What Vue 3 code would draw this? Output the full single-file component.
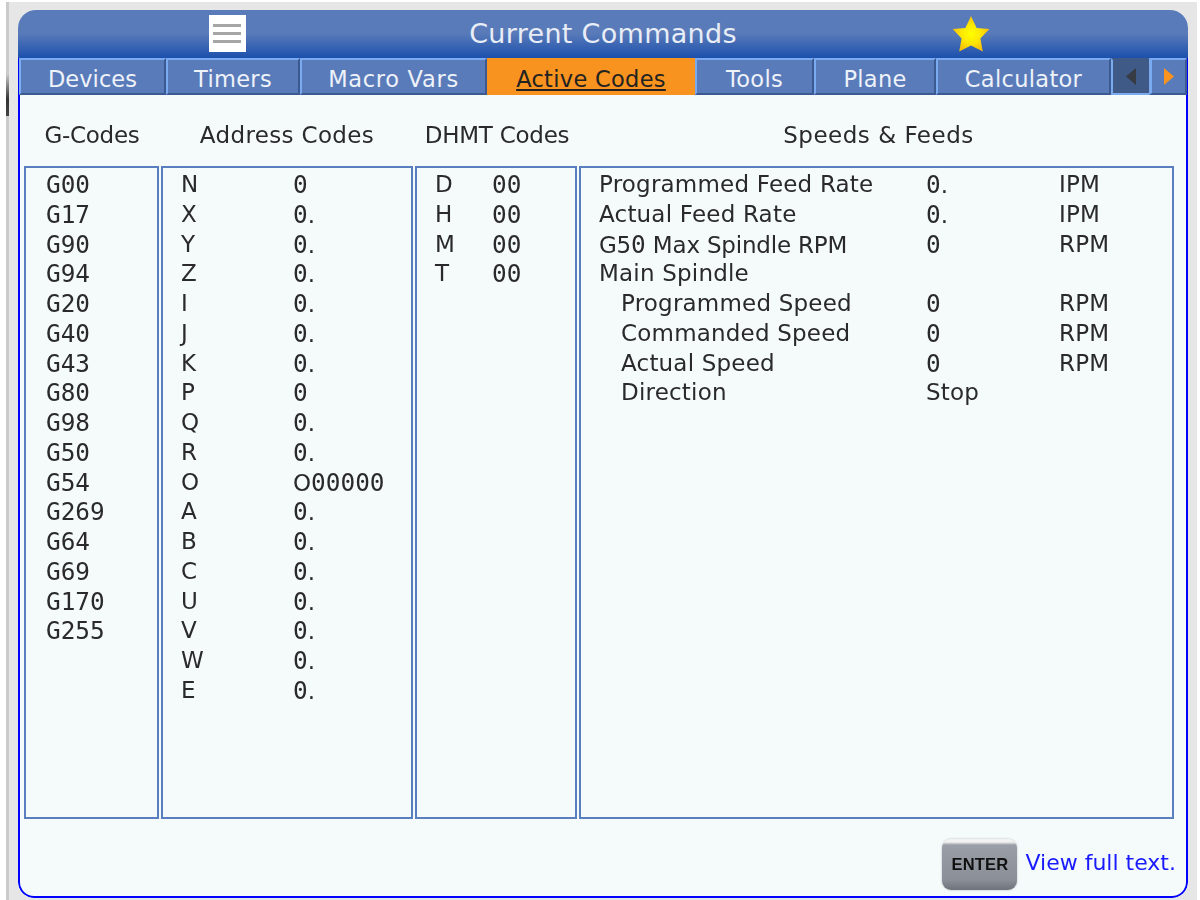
<script setup>
const tabs = [
  { label: 'Devices', cls: 'tab-tight' },
  { label: 'Timers' },
  { label: 'Macro Vars', cls: 'tab-wide' },
  { label: 'Active Codes', cls: 'active' },
  { label: 'Tools' },
  { label: 'Plane' },
  { label: 'Calculator' },
]
const gCodes = ['G00','G17','G90','G94','G20','G40','G43','G80','G98','G50','G54','G269','G64','G69','G170','G255']
const addr = [['N','0'],['X','0.'],['Y','0.'],['Z','0.'],['I','0.'],['J','0.'],['K','0.'],['P','0'],['Q','0.'],['R','0.'],['O','O00000'],['A','0.'],['B','0.'],['C','0.'],['U','0.'],['V','0.'],['W','0.'],['E','0.']]
const dhmt = [['D','00'],['H','00'],['M','00'],['T','00']]
const speeds = [
  { name: 'Programmed Feed Rate', val: '0.', unit: 'IPM' },
  { name: 'Actual Feed Rate', val: '0.', unit: 'IPM' },
  { name: 'G50 Max Spindle RPM', val: '0', unit: 'RPM', tight: true },
  { name: 'Main Spindle', val: '', unit: '' },
  { name: 'Programmed Speed', val: '0', unit: 'RPM', sub: true },
  { name: 'Commanded Speed', val: '0', unit: 'RPM', sub: true },
  { name: 'Actual Speed', val: '0', unit: 'RPM', sub: true },
  { name: 'Direction', val: 'Stop', unit: '', sub: true },
]
// The machine font has a dotted zero: split it out of the proportional text.
const parts = (s) => s.split(/(0+)/).filter(Boolean)
</script>

<template>
  <div class="page">
    <div class="backdrop">
      <div class="edge-mark"></div>
      <div class="window">
        <header class="titlebar">
          <div class="menu-btn">
            <svg width="37" height="37" viewBox="0 0 37 37">
              <rect width="37" height="37" fill="#fff" />
              <rect x="4" y="9" width="28" height="3" fill="#a6a6a6" />
              <rect x="4" y="17" width="28" height="3" fill="#a6a6a6" />
              <rect x="4" y="25" width="28" height="3" fill="#a6a6a6" />
            </svg>
          </div>
          <div class="title">Current Commands</div>
          <svg class="star" width="40" height="40" viewBox="0 0 40 40">
            <defs>
              <radialGradient id="starFill" cx="50%" cy="50%" r="50%">
                <stop offset="0%" stop-color="#ffff00" />
                <stop offset="55%" stop-color="#fde604" />
                <stop offset="100%" stop-color="#f4bd0c" />
              </radialGradient>
            </defs>
            <path d="M20 2 L25.6 14 L38.4 15 L29.4 24.4 L31.8 37.4 L20 31.4 L8.2 37.4 L10.6 24.4 L1.6 15 L14.4 14 Z" fill="url(#starFill)" />
          </svg>
        </header>

        <nav class="tabs">
          <div v-for="t in tabs" :key="t.label" class="tab" :class="t.cls">{{ t.label }}</div>
          <div class="arrow arrow-left">
            <svg width="10" height="17" viewBox="0 0 10 17"><path d="M10 0 V17 L0 8.5 Z" fill="#363b44" /></svg>
          </div>
          <div class="arrow arrow-right">
            <svg width="10" height="17" viewBox="0 0 10 17"><path d="M0 0 V17 L10 8.5 Z" fill="#f7931e" /></svg>
          </div>
        </nav>

        <main class="content">
          <div class="columns heads">
            <div class="head-tight">G-Codes</div>
            <div class="head-addr">Address Codes</div>
            <div class="head-tighter">DHMT Codes</div>
            <div class="head-right">Speeds &amp; Feeds</div>
          </div>

          <div class="columns panels">
            <section class="panel panel-g">
              <div v-for="g in gCodes" :key="g" class="row zero">{{ g }}</div>
            </section>
            <section class="panel panel-a">
              <div v-for="a in addr" :key="a[0]" class="row pair-a">
                <span>{{ a[0] }}</span>
                <span><span v-for="(p, i) in parts(a[1])" :key="i" :class="{ zero: p[0] === '0' }">{{ p }}</span></span>
              </div>
            </section>
            <section class="panel panel-d">
              <div v-for="d in dhmt" :key="d[0]" class="row pair-d">
                <span>{{ d[0] }}</span><span class="zero">{{ d[1] }}</span>
              </div>
            </section>
            <section class="panel panel-s">
              <div v-for="s in speeds" :key="s.name" class="row trio">
                <span :class="{ sub: s.sub, tight: s.tight }">
                  <span v-for="(p, i) in parts(s.name)" :key="i" :class="{ zero: p[0] === '0' }">{{ p }}</span>
                </span>
                <span><span v-for="(p, i) in parts(s.val)" :key="i" :class="{ zero: p[0] === '0' }">{{ p }}</span></span>
                <span>{{ s.unit }}</span>
              </div>
            </section>
          </div>

          <footer class="foot">
            <div class="enter-key"><span>ENTER</span></div>
            <span class="link">View full text.</span>
          </footer>
        </main>
      </div>
    </div>
  </div>
</template>

<style>
html, body { margin: 0; background: #fff; }
</style>

<style scoped>
.page {
  width: 1200px;
  height: 900px;
  overflow: hidden;
  box-sizing: border-box;
  padding: 2px 3px 0 6px;
  font-family: "DejaVu Sans", sans-serif;
  font-size: 23px;
  color: #2a2a2a;
}
.backdrop {
  position: relative;
  height: 898px;
  box-sizing: border-box;
  background: linear-gradient(90deg, #cbcbcb 0 3px, #e6e6e6 3px);
  padding: 8px 9px 0 12px;
}
.edge-mark {
  position: absolute;
  left: 0;
  top: 72px;
  width: 3px;
  height: 42px;
  background: linear-gradient(180deg, #cbcbcb, #333 60%, #444);
}
.window {
  height: 888px;
  display: flex;
  flex-direction: column;
  border-radius: 18px 18px 16px 16px;
  overflow: hidden;
  background: #f5fbfb;
  filter: blur(0.45px);
}
.titlebar {
  position: relative;
  height: 48px;
  flex: none;
  background: linear-gradient(180deg, #5a7bb9 0%, #5a7bb9 48%, #1c50ad 100%);
  display: flex;
  align-items: center;
  justify-content: center;
}
.title {
  color: #e8edf6;
  font-size: 27px;
  line-height: 46px;
  letter-spacing: 0.3px;
  margin-left: 0;
}
.menu-btn {
  position: absolute;
  left: 191px;
  top: 5px;
  width: 37px;
  height: 37px;
}
.star {
  position: absolute;
  left: 933px;
  top: 4px;
}
.tabs {
  flex: none;
  height: 37px;
  display: grid;
  grid-template-columns: 147px 134px 187px 208px 119px 122px 175px 38px 38px;
  grid-template-rows: 37px;
  background: #0000ff;
  padding: 0 1px;
  box-sizing: border-box;
}
.tab {
  box-sizing: border-box;
  background: #5a7bb9;
  color: #eef2f9;
  border-top: 2px solid #7aaaf0;
  border-left: 2px solid #7aaaf0;
  border-right: 2px solid #3c5a92;
  border-bottom: 2px solid #3c5a92;
  text-align: center;
  line-height: 39px;
  height: 37px;
  overflow: hidden;
  letter-spacing: 0.3px;
  font-size: 22.5px;
}
.tab-tight { letter-spacing: 0.05px; }
.tab-wide { letter-spacing: 0.7px; }
.tab.active {
  background: #f7931e;
  color: #222;
  border-color: #f7931e;
  text-decoration: underline;
}
.arrow {
  box-sizing: border-box;
  display: flex;
  align-items: center;
  justify-content: center;
  height: 37px;
}
.arrow-left {
  background: #3f5a86;
  border-top: 2px solid #3f5a86;
  border-left: 2px solid #7aaaf0;
  border-bottom: 2px solid #7aaaf0;
}
.arrow-right {
  background: #5a7bb9;
  border-top: 2px solid #7aaaf0;
  border-left: 3px solid #7aaaf0;
  border-right: 2px solid #3c5a92;
  border-bottom: 2px solid #3c5a92;
}
.content {
  flex: 1;
  min-height: 0;
  display: flex;
  flex-direction: column;
  box-sizing: border-box;
  border: 2px solid #0000ff;
  border-top: 0;
  border-radius: 0 0 16px 16px;
  padding: 0 10px 0 4px;
}
.columns {
  display: grid;
  grid-template-columns: 137px 254px 164px 595px;
}
.heads {
  height: 71px;
  text-align: center;
  align-items: center;
  padding-top: 8px;
  box-sizing: border-box;
  letter-spacing: 0.45px;
}
.head-tight { letter-spacing: -0.3px; margin-left: -1px; }
.head-addr { letter-spacing: 0.35px; margin-left: -2px; }
.head-tighter { letter-spacing: -0.25px; }
.head-right { padding-left: 4px; letter-spacing: 0.5px; }
.panels { height: 653px; }
.panel {
  box-sizing: border-box;
  border: 2px solid #5a7fbe;
  margin-right: 2px;
  padding-top: 2px;
  line-height: 29.75px;
}
.panel-s { margin-right: 0; }
.row { height: 29.75px; }
.panel-g { padding-left: 20px; }
.panel-a { padding-left: 18px; }
.panel-d { padding-left: 18px; }
.panel-s { padding-left: 18px; }
.pair-a { display: grid; grid-template-columns: 112px 1fr; }
.pair-d { display: grid; grid-template-columns: 57px 1fr; }
.trio { display: grid; grid-template-columns: 327px 133px 1fr; letter-spacing: 0.2px; }
.sub { padding-left: 22px; }
.tight { letter-spacing: -0.2px; }
.zero {
  font-family: "DejaVu Sans Mono", monospace;
  font-size: 24.4px;
  letter-spacing: 0;
}
.foot {
  flex: 1;
  display: flex;
  align-items: flex-start;
  justify-content: flex-end;
  gap: 8px;
  padding-top: 20px;
}
.enter-key {
  width: 75px;
  height: 51px;
  box-sizing: border-box;
  border-radius: 9px;
  background: linear-gradient(180deg, #f2f2f2 0 3px, #9a9ea6 6px, #8a8f98 80%, #6e727a 100%);
  display: flex;
  align-items: center;
  justify-content: center;
  box-shadow: 0 0 2px #aaa;
}
.enter-key span {
  font-family: "Liberation Sans", sans-serif;
  font-weight: 700;
  font-size: 16.5px;
  color: #111;
  letter-spacing: 0.2px;
}
.link {
  color: #1a1aff;
  font-size: 22px;
  line-height: 48px;
}
</style>
